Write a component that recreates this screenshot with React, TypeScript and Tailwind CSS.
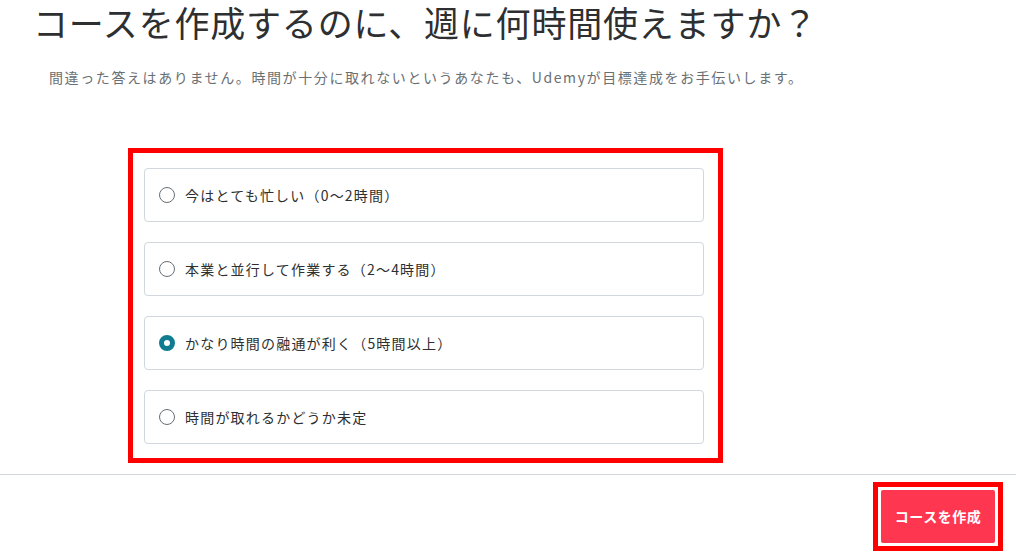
import React, { useState } from "react";

const options = [
  "今はとても忙しい（0〜2時間）",
  "本業と並行して作業する（2〜4時間）",
  "かなり時間の融通が利く（5時間以上）",
  "時間が取れるかどうか未定",
];

export default function App() {
  const [selected, setSelected] = useState(2);
  return (
    <div
      className="w-[1016px] h-[557px] bg-white flex flex-col overflow-hidden"
      style={{ fontFamily: '"Noto Sans CJK JP", "Noto Sans", sans-serif' }}
    >
      <div className="flex-1 flex flex-col">
        <h1 className="pl-[33px] text-[35px] leading-[44px] text-[#2d2f31] font-normal tracking-[0.8px]">
          コースを作成するのに、週に何時間使えますか？
        </h1>
        <p className="pl-[49px] mt-[22px] text-[14px] leading-[22px] text-[#6a6f73] tracking-[1.6px]">
          間違った答えはありません。時間が十分に取れないというあなたも、Udemyが目標達成をお手伝いします。
        </p>
        <div className="ml-[128px] mt-[60px] w-[595px] border-[5px] border-[#ff0000] pt-[15px] pb-[14px] pl-[11px] pr-[14px] flex flex-col gap-[20px]">
          {options.map((o, i) => (
            <label
              key={i}
              onClick={() => setSelected(i)}
              className="h-[54px] w-[560px] border border-[#d1d7dc] rounded-[4px] flex items-center pl-[14px] cursor-pointer"
            >
              {selected === i ? (
                <span className="w-[16px] h-[16px] rounded-full border-[5px] border-[#0f7c90] bg-white shrink-0" />
              ) : (
                <span className="w-[16px] h-[16px] rounded-full border border-[#6a6f73] bg-white shrink-0" />
              )}
              <span className="ml-[10px] text-[14px] text-[#2d2f31] tracking-[1.2px]">{o}</span>
            </label>
          ))}
        </div>
      </div>
      <div className="h-[83px] border-t border-[#d1d7dc] flex justify-end items-start pt-[7px] pr-[13px]">
        <div className="border-[5px] border-[#ff0000] p-[3px]">
          <button className="w-[114px] h-[53px] bg-[#ff3650] rounded-[2px] text-white font-bold text-[14px] tracking-[0.5px]">
            コースを作成
          </button>
        </div>
      </div>
    </div>
  );
}
